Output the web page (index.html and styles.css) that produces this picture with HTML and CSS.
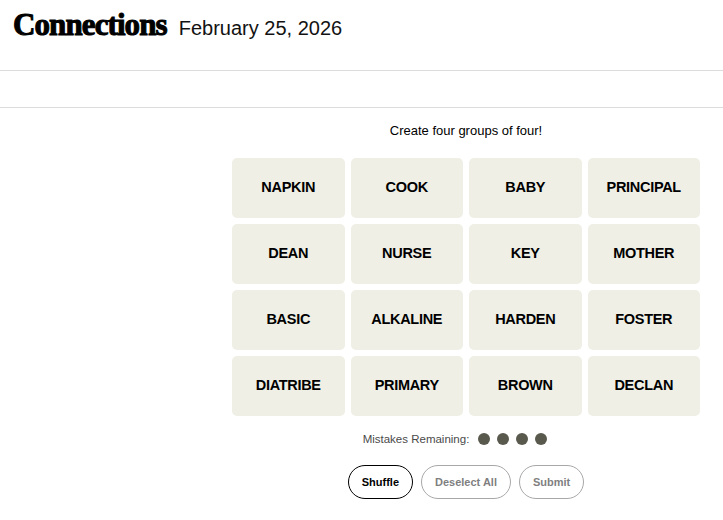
FILE: index.html
```
<!DOCTYPE html>
<html lang="en">
<head>
<meta charset="utf-8">
<title>Connections</title>
<link rel="stylesheet" href="styles.css">
</head>
<body>
<header class="header">
  <h1 class="title">Connections</h1>
  <span class="date">February 25, 2026</span>
</header>
<div class="band"></div>
<main class="game">
  <p class="prompt">Create four groups of four!</p>
  <div class="grid">
    <button class="tile">NAPKIN</button>
    <button class="tile">COOK</button>
    <button class="tile">BABY</button>
    <button class="tile">PRINCIPAL</button>
    <button class="tile">DEAN</button>
    <button class="tile">NURSE</button>
    <button class="tile">KEY</button>
    <button class="tile">MOTHER</button>
    <button class="tile">BASIC</button>
    <button class="tile">ALKALINE</button>
    <button class="tile">HARDEN</button>
    <button class="tile">FOSTER</button>
    <button class="tile">DIATRIBE</button>
    <button class="tile">PRIMARY</button>
    <button class="tile">BROWN</button>
    <button class="tile">DECLAN</button>
  </div>
  <div class="mistakes">
    <span class="mistakes-label">Mistakes Remaining:</span>
    <span class="dots"><span class="dot"></span><span class="dot"></span><span class="dot"></span><span class="dot"></span></span>
  </div>
  <div class="actions">
    <button class="pill pill-active">Shuffle</button>
    <button class="pill pill-disabled">Deselect All</button>
    <button class="pill pill-disabled">Submit</button>
  </div>
</main>
</body>
</html>
```
FILE: styles.css
```
html, body {
  margin: 0;
  padding: 0;
  background: #ffffff;
  font-family: "Liberation Sans", Arial, sans-serif;
  color: #000;
}

.header {
  box-sizing: border-box;
  height: 71px;
  padding: 10px 0 0 13px;
  display: flex;
  align-items: baseline;
  border-bottom: 1px solid #dcdcdc;
}

.title {
  margin: 0;
  font-family: "Liberation Serif", "Times New Roman", serif;
  font-weight: 700;
  font-size: 31px;
  line-height: 30px;
  letter-spacing: -0.9px;
  -webkit-text-stroke: 1px #000;
}

.date {
  margin-left: 12px;
  font-size: 20px;
  line-height: 30px;
  font-weight: 400;
  color: #121212;
}

.band {
  height: 36px;
  border-bottom: 1px solid #dcdcdc;
}

.game {
  width: 468px;
  margin-left: 232px;
  display: flex;
  flex-direction: column;
  align-items: center;
}

.prompt {
  margin: 15px 0 0;
  font-size: 13px;
  line-height: 16px;
  color: #000;
}

.grid {
  margin-top: 19px;
  width: 468px;
  display: grid;
  grid-template-columns: repeat(4, 1fr);
  grid-auto-rows: 60px;
  gap: 6px;
}

.tile {
  border: none;
  border-radius: 5px;
  background: #efefe6;
  font-family: "Liberation Sans", Arial, sans-serif;
  font-weight: 700;
  font-size: 14.5px;
  letter-spacing: -0.3px;
  color: #000;
  padding: 0 0 3px;
}

.mistakes {
  margin-top: 15px;
  height: 16px;
  padding-right: 22px;
  display: flex;
  align-items: center;
  gap: 9px;
}

.mistakes-label {
  font-size: 11.5px;
  color: #4a4a4a;
}

.dots {
  display: flex;
  gap: 7px;
}

.dot {
  width: 12px;
  height: 12px;
  border-radius: 50%;
  background: #5a594e;
}

.actions {
  margin-top: 18px;
  display: flex;
  gap: 8px;
}

.pill {
  height: 34px;
  padding: 0 13px;
  border-radius: 17px;
  background: #fff;
  font-family: "Liberation Sans", Arial, sans-serif;
  font-weight: 700;
  font-size: 11px;
}

.pill-active {
  border: 1px solid #000;
  color: #000;
}

.pill-disabled {
  border: 1px solid #a8a8a8;
  color: #7f7f7f;
}
```
